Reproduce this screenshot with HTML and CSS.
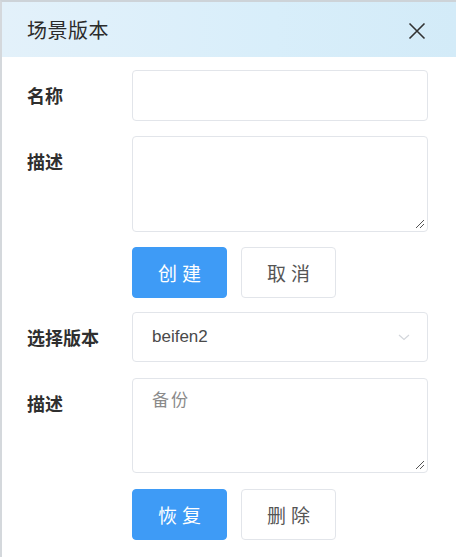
FILE: index.html
```html
<!DOCTYPE html>
<html lang="zh">
<head>
<meta charset="utf-8">
<link rel="stylesheet" href="styles.css">
</head>
<body>
<div class="dialog">
  <div class="header">
    <span class="title">场景版本</span>
    <svg class="close" width="18" height="18" viewBox="0 0 18 18"><path d="M1.5 1.5L16.5 16.5M16.5 1.5L1.5 16.5" stroke="#333" stroke-width="1.6" fill="none"/></svg>
  </div>
  <div class="form">
    <div class="row">
      <div class="label">名称</div>
      <div class="control"><div class="input"></div></div>
    </div>
    <div class="row">
      <div class="label">描述</div>
      <div class="control"><div class="textarea"><span class="grip"></span></div></div>
    </div>
    <div class="row btn-row">
      <div class="label"></div>
      <div class="control buttons">
        <button class="btn primary">创建</button>
        <button class="btn">取消</button>
      </div>
    </div>
    <div class="row">
      <div class="label">选择版本</div>
      <div class="control">
        <div class="input select">
          <span class="value">beifen2</span>
          <svg class="chev" width="12" height="7" viewBox="0 0 12 7"><path d="M1 1L6 5.5L11 1" stroke="#d3d6db" stroke-width="1.2" fill="none"/></svg>
        </div>
      </div>
    </div>
    <div class="row">
      <div class="label">描述</div>
      <div class="control"><div class="textarea short"><span class="text">备份</span><span class="grip"></span></div></div>
    </div>
    <div class="row last">
      <div class="label"></div>
      <div class="control buttons">
        <button class="btn primary">恢复</button>
        <button class="btn">删除</button>
      </div>
    </div>
  </div>
</div>
</body>
</html>
```
FILE: styles.css
```css
html, body {
  margin: 0;
  padding: 0;
  background: #fff;
}
body {
  width: 456px;
  height: 557px;
  overflow: hidden;
  font-family: "Noto Sans CJK SC", "Liberation Sans", sans-serif;
  color: #303133;
}
.dialog {
  width: 456px;
  height: 557px;
  box-sizing: border-box;
  border-left: 2px solid #d4d8dc;
  border-top: 2px solid #cdd3d8;
  background: #fff;
}
.header {
  height: 55px;
  display: flex;
  align-items: center;
  justify-content: space-between;
  padding: 0 30px 0 25px;
  background: linear-gradient(90deg, #e3f1fa 0%, #d8eefa 60%, #d3ebf8 100%);
}
.title {
  font-size: 20px;
  color: #2b2b2b;
  letter-spacing: 0.5px;
}
.close {
  display: block;
  margin-top: 2px;
}
.form {
  padding-top: 13px;
  display: flex;
  flex-direction: column;
  gap: 15px;
}
.row {
  display: flex;
  align-items: flex-start;
}
.btn-row {
  margin-bottom: -1px;
}
.last {
  margin-top: 1px;
}
.label {
  width: 105px;
  padding-left: 25px;
  box-sizing: content-box;
  font-size: 18px;
  font-weight: bold;
  line-height: 51px;
  color: #2f2f2f;
}
.control {
  width: 296px;
}
.input {
  height: 51px;
  box-sizing: border-box;
  border: 1px solid #e2e5ea;
  border-radius: 4px;
  background: #fff;
}
.select {
  height: 50px;
  display: flex;
  align-items: center;
  justify-content: space-between;
  padding: 0 17px 0 19px;
}
.value {
  font-family: "Liberation Sans", sans-serif;
  font-size: 17px;
  color: #4a4a4a;
}
.textarea {
  position: relative;
  height: 96px;
  box-sizing: border-box;
  border: 1px solid #e2e5ea;
  border-radius: 4px;
  padding: 7px 19px;
}
.short {
  height: 95px;
}
.text {
  font-size: 17px;
  color: #8a8a8a;
  letter-spacing: 2px;
}
.grip {
  position: absolute;
  right: 3px;
  bottom: 3px;
  width: 8px;
  height: 8px;
  background: linear-gradient(135deg, transparent 0 45%, #555 45% 55%, transparent 55% 70%, #555 70% 80%, transparent 80%);
}
.buttons {
  display: flex;
  gap: 14px;
}
.btn {
  width: 95px;
  height: 51px;
  box-sizing: border-box;
  border: 1px solid #e2e5ea;
  border-radius: 4px;
  background: #fff;
  color: #555;
  font-family: "Noto Sans CJK SC", sans-serif;
  font-size: 19px;
  letter-spacing: 5px;
  padding: 0 0 0 5px;
  cursor: pointer;
}
.primary {
  background: #3e9bf6;
  border-color: #3e9bf6;
  color: #fff;
}
```
